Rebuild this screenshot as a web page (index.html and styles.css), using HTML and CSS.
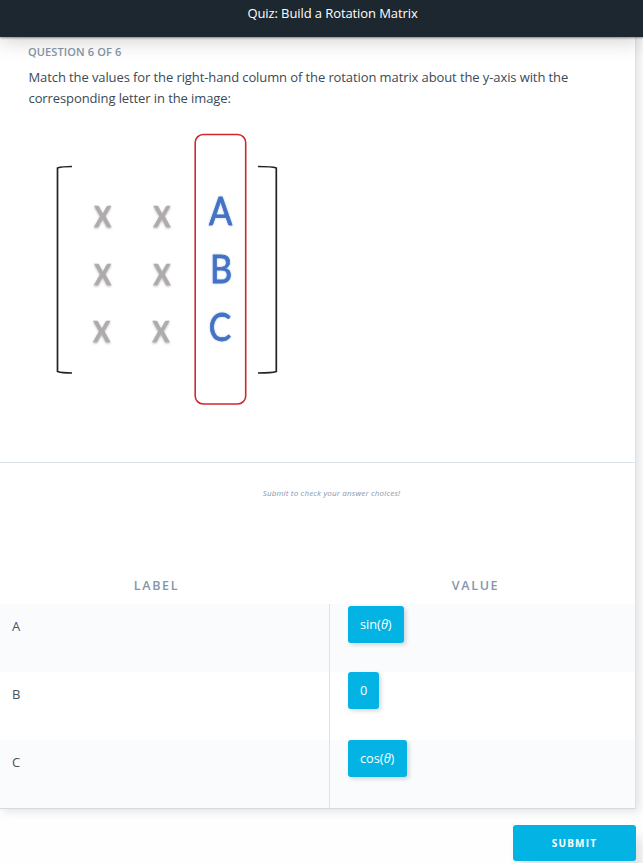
FILE: index.html
```html
<!DOCTYPE html>
<html lang="en">
<head>
<meta charset="utf-8">
<title>Quiz: Build a Rotation Matrix</title>
<link rel="stylesheet" href="styles.css">
</head>
<body>
<header class="topbar"><h1>Quiz: Build a Rotation Matrix</h1></header>
<main class="card">
  <section class="question">
    <h2>QUESTION 6 OF 6</h2>
    <p>Match the values for the right-hand column of the rotation matrix about the y-axis with the corresponding letter in the image:</p>
    <svg class="matrix" width="260" height="300" viewBox="40 120 260 300" role="img" aria-label="Rotation matrix">
      <g class="bracket">
        <path d="M72 166.5Q62 166.5 57.5 168V371.5Q62 373 72 373"/>
        <path d="M258 166.5Q272 166.5 276.3 168V371.5Q272 373 258 373"/>
      </g>
      <rect class="highlight" x="195.2" y="134.5" width="50.5" height="269.5" rx="8"/>
      <g class="unknown">
        <text transform="translate(102.7 227) scale(.87 1)">X</text><text transform="translate(162 227) scale(.87 1)">X</text>
        <text transform="translate(102.7 285) scale(.87 1)">X</text><text transform="translate(162 285) scale(.87 1)">X</text>
        <text transform="translate(101.7 342) scale(.87 1)">X</text><text transform="translate(161 342) scale(.87 1)">X</text>
      </g>
      <g class="letter">
        <text transform="translate(220.7 225.3) scale(.89 1)">A</text>
        <text transform="translate(221 283.3) scale(.89 1)">B</text>
        <text transform="translate(220 340.7) scale(.87 1)">C</text>
      </g>
    </svg>
  </section>
  <section class="answers">
    <p class="hint">Submit to check your answer choices!</p>
    <div class="row head"><div>LABEL</div><div>VALUE</div></div>
    <div class="row"><div class="label">A</div><div class="value"><span class="chip sin">sin(<i>θ</i>)</span></div></div>
    <div class="row"><div class="label">B</div><div class="value"><span class="chip zero">0</span></div></div>
    <div class="row"><div class="label">C</div><div class="value"><span class="chip cos">cos(<i>θ</i>)</span></div></div>
  </section>
</main>
<footer><button class="submit">SUBMIT</button></footer>
</body>
</html>
```
FILE: styles.css
```css
* { box-sizing: border-box; }
body {
  margin: 0;
  height: 863px;
  overflow: hidden;
  background: #fefefe;
  color: #4a5157;
  font: 13px/21px "Open Sans", sans-serif;
}
h1, h2, p { margin: 0; }
.topbar {
  position: relative;
  height: 37px;
  padding-top: 3px;
  padding-left: 22px;
  background: #1d272f;
  color: #fff;
  text-align: center;
  box-shadow: 0 1px 2px rgba(0, 0, 0, .4), 0 3px 22px rgba(0, 0, 0, .2);
}
.topbar h1 { font-size: 13px; line-height: 21px; font-weight: 400; letter-spacing: -.09px; }
.card {
  width: 636px;
  height: 772px;
  background: #fff;
  border-right: 1px solid #dbe2e8;
  border-bottom: 1px solid #d5dae0;
  box-shadow: 3px 2px 9px rgba(46, 61, 73, .15);
}
.question {
  height: 426px;
  padding: 5px 28px 0;
  border-bottom: 1px solid #dbe2e8;
  color: #3b4a56;
}
.question h2 { font-size: 11px; line-height: 20px; font-weight: 600; letter-spacing: .12px; color: #8496a8; }
.question p { width: 560px; margin-top: 5px; padding-left: .5px; letter-spacing: -.1px; }
.matrix { display: block; margin: 11px 0 0 12px; }
.bracket { fill: none; stroke: #222; stroke-width: 1.7; }
.highlight { fill: none; stroke: #d0282d; stroke-width: 1.6; }
.unknown, .letter { font-family: Lato, sans-serif; text-anchor: middle; }
.unknown { font-size: 29px; font-weight: 700; fill: #afabab; stroke: #afabab; stroke-width: .5; filter: drop-shadow(0 1px 1px rgba(0, 0, 0, .3)); }
.letter { font-size: 38.5px; fill: #4472c4; stroke: #4472c4; stroke-width: .8; filter: drop-shadow(0 0 1px rgba(68, 114, 196, .4)); }
.hint {
  height: 101px;
  padding: 19px 0 0 28px;
  text-align: center;
  font-size: 8px;
  font-style: italic;
  letter-spacing: .17px;
  color: #8797aa;
}
.row { display: grid; grid-template-columns: 329px 1fr; height: 68px; }
.row:nth-of-type(even) { background: #fafbfd; }
.head {
  height: 40px;
  padding-top: 11px;
  text-align: center;
  font-size: 12.5px;
  font-weight: 600;
  letter-spacing: 1.7px;
  color: #8496a8;
}
.head div:first-child { padding-right: 16px; }
.head div:last-child { padding-right: 13px; }
.label { padding: 12px; }
.value { padding: 0 18px; border-left: 1px solid #dbe2e8; }
.chip {
  display: block;
  width: fit-content;
  height: 37px;
  padding: 8px 12px;
  border-radius: 3px;
  background: #02b3e4;
  color: #fff;
  font-size: 12.75px;
  box-shadow: 2px 2px 4px rgba(46, 61, 73, .2);
}
.sin { width: 56px; margin-top: 2px; }
.zero { width: 31px; }
.cos { width: 59px; }
footer { display: flex; justify-content: flex-end; padding: 16px 7px 0 0; }
.submit {
  width: 123px;
  height: 36px;
  padding: 0;
  border: 0;
  border-radius: 3px;
  background: #02b3e4;
  color: #fff;
  font: 700 10px/35px "Open Sans", sans-serif;
  letter-spacing: 1.2px;
  box-shadow: 6px 12px 12px rgba(0, 0, 0, .12);
}
```
